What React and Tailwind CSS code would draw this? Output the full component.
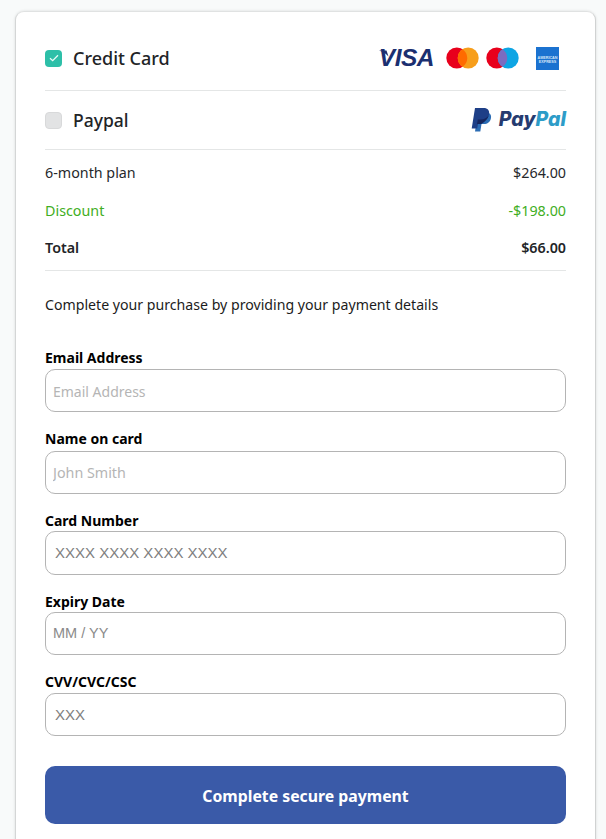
import React from "react";

function Visa() {
  return (
    <div className="relative w-[55px] h-[24px] flex items-center justify-end">
      <svg className="absolute left-0 top-[4px]" width="10" height="7" viewBox="0 0 10 7" aria-hidden="true">
        <path d="M0 0.500H7.500L9.500 6.500C7 3.500 3.500 1.500 0 0.500z" fill="#1d2f6f" />
      </svg>
      <span className="text-[#1b2f70] italic font-bold text-[24.500px] leading-none tracking-[-0.5px] font-['Liberation_Sans',sans-serif]">VISA</span>
    </div>
  );
}

function Circles({ left, right, mid }) {
  return (
    <svg width="33" height="22" viewBox="0 0 33 22" aria-hidden="true">
      <circle cx="10.800" cy="11" r="10.500" fill={left} />
      <circle cx="22.200" cy="11" r="10.500" fill={right} />
      <path d="M16.500 2.200a10.500 10.500 0 0 1 0 17.600a10.500 10.500 0 0 1 0-17.600z" fill={mid} />
    </svg>
  );
}

function Amex() {
  return (
    <svg width="23" height="23" viewBox="0 0 23 23" aria-hidden="true">
      <rect width="23" height="23" fill="#1b72d0" />
      <text x="11.500" y="11.500" textAnchor="middle" fontSize="3.700" fontWeight="700" fill="#d6e6f8" fontFamily="Liberation Sans, sans-serif">AMERICAN</text>
      <text x="11.500" y="15.500" textAnchor="middle" fontSize="3.700" fontWeight="700" fill="#d6e6f8" fontFamily="Liberation Sans, sans-serif">EXPRESS</text>
    </svg>
  );
}

function PayPalMark() {
  return (
    <svg width="21" height="24" viewBox="0 0 21 24" aria-hidden="true">
      <path d="M7 4.500h8c3.500 0 5.700 2 5 5.500c-.8 4-3.500 6-7 6h-2.500L9.300 23.500H4L7 4.500z" fill="#2b6cb4" />
      <path d="M4 0h8.500c4.300 0 6.300 2.500 5.500 6.300c-.9 4.500-4 6.700-8 6.700H7.500l-1.300 7.500H.7L4 0z" fill="#1e3f87" />
      <path d="M6.800 11.500h3c3.500 0 6.500-1.500 8-4.200c-.9 4-4 6.700-7.500 8.700H6l.8-4.500z" fill="#16265e" />
    </svg>
  );
}

function Check() {
  return (
    <svg width="10" height="8" viewBox="0 0 10 8" fill="none" aria-hidden="true">
      <path d="M1 4.200L3.700 6.700L9 1.200" stroke="#e8fbf7" strokeWidth="1.300" />
    </svg>
  );
}

function Field({ label, placeholder, wrapClass, inputClass, labelClass }) {
  return (
    <div className={wrapClass}>
      <label className={`block text-[14px] leading-[20px] font-bold text-black ${labelClass}`}>{label}</label>
      <input
        readOnly
        placeholder={placeholder}
        className={`block w-full bg-white border border-[#b4b4b4] rounded-[10px] outline-none ${inputClass}`}
      />
    </div>
  );
}

export default function App() {
  return (
    <div className="h-[839px] overflow-hidden bg-[#f8fafa] pl-[15px] pr-[10px] pt-[11px] font-['Noto_Sans',sans-serif]">
      <div className="h-[900px] bg-white rounded-t-[9px] border border-[#e0e2e2] border-l-[#d4d6d6] border-r-[#d0d2d2] shadow-[0_0_3px_rgba(0,0,0,0.12)] px-[29px] pt-[16px]">
        <div className="h-[63px] border-b border-[#e4e6e6] flex items-center justify-between">
          <div className="flex items-center pb-[2px]">
            <span className="w-[17px] h-[17px] rounded-[4px] bg-[#2dbfa8] flex items-center justify-center">
              <Check />
            </span>
            <span className="ml-[11px] text-[18px] font-medium text-[#222427]">Credit Card</span>
          </div>
          <div className="flex items-center pr-[7px] pb-[2px]">
            <Visa />
            <span className="ml-[12px] flex"><Circles left="#e8001c" right="#f79e1b" mid="#ff6a00" /></span>
            <span className="ml-[7px] flex"><Circles left="#e8001c" right="#0ea5e4" mid="#7a6cc0" /></span>
            <span className="ml-[17px] flex"><Amex /></span>
          </div>
        </div>

        <div className="h-[59px] border-b border-[#e4e6e6] flex items-center justify-between">
          <div className="flex items-center">
            <span className="w-[17px] h-[17px] rounded-[4px] bg-[#e2e3e4] border border-[#d8d9da]" />
            <span className="ml-[11px] text-[17.500px] font-medium text-[#222427]">Paypal</span>
          </div>
          <div className="flex items-center">
            <PayPalMark />
            <span className="ml-[7px] italic font-extrabold text-[19.500px] leading-none font-['Inter',sans-serif]">
              <span className="text-[#253b70]">Pay</span>
              <span className="text-[#2d9cc8]">Pal</span>
            </span>
          </div>
        </div>

        <div className="pt-[4px] pb-[4px] border-b border-[#e4e6e6] text-[14.300px]">
          <div className="h-[38px] flex items-center justify-between text-[#26282b]">
            <span>6-month plan</span>
            <span>$264.00</span>
          </div>
          <div className="h-[38px] flex items-center justify-between text-[#3fae23]">
            <span>Discount</span>
            <span>-$198.00</span>
          </div>
          <div className="h-[36px] flex items-center justify-between font-semibold text-[#222427]">
            <span>Total</span>
            <span>$66.00</span>
          </div>
        </div>

        <p className="mt-[23px] text-[14.150px] leading-[22px] text-[#1c1c1c]">
          Complete your purchase by providing your payment details
        </p>

        <Field wrapClass="mt-[32px]" labelClass="mb-px" label="Email Address" placeholder="Email Address"
          inputClass="h-[43px] pl-[7px] pt-[1px] text-[14px] placeholder:text-[#b5b5b5]" />
        <Field wrapClass="mt-[17px]" labelClass="mb-[2px]" label="Name on card" placeholder="John Smith"
          inputClass="h-[43px] pl-[7px] text-[14.300px] placeholder:text-[#b5b5b5]" />
        <Field wrapClass="mt-[17px]" labelClass="mb-0" label="Card Number" placeholder="XXXX XXXX XXXX XXXX"
          inputClass="h-[44px] pl-[9px] pb-[1px] text-[15px] font-['Liberation_Sans',sans-serif] placeholder:text-[#808080]" />
        <Field wrapClass="mt-[17px]" labelClass="mb-0" label="Expiry Date" placeholder="MM / YY"
          inputClass="h-[43px] pl-[7px] pb-[1px] text-[14.500px] font-['Liberation_Sans',sans-serif] placeholder:text-[#8a8a8a]" />
        <Field wrapClass="mt-[17px]" labelClass="mb-px" label="CVV/CVC/CSC" placeholder="XXX"
          inputClass="h-[43px] pl-[9px] text-[15px] font-['Liberation_Sans',sans-serif] placeholder:text-[#808080]" />

        <button className="mt-[30px] w-full h-[58px] rounded-[10px] bg-[#3a5aa8] text-white text-[15.800px] font-bold pt-[3px]">
          Complete secure payment
        </button>
      </div>
    </div>
  );
}
